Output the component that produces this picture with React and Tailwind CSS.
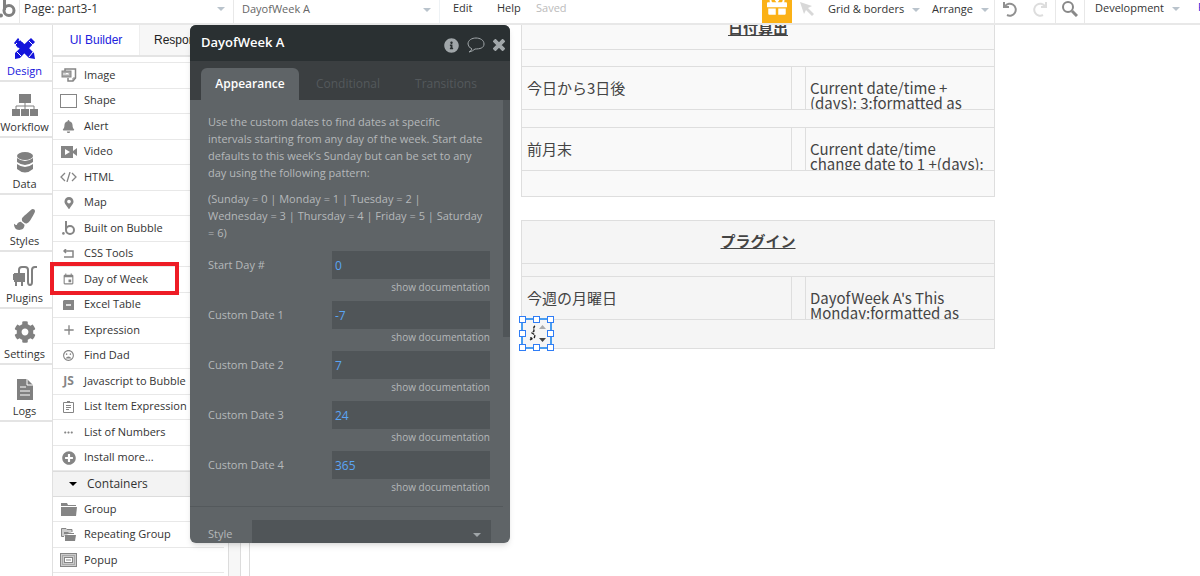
import React, { useState } from 'react'
import { FaPaintBrush, FaCog, FaBell, FaMapMarkerAlt, FaInfoCircle, FaPlusCircle, FaGift } from 'react-icons/fa'
import { MdEvent, MdMoodBad, MdMoreHoriz, MdAdd } from 'react-icons/md'

const DesignIcon = () => (
    <svg width="22" height="22" viewBox="0 0 22 22" fill="currentColor">
        <path d="M4 0 L9 5 L4 10 L0 5 Z M13 8 L20 15 L21 21 L15 20 L8 13 Z" />
        <path d="M17 0 L21 4 L6 20 L1 21 L1 15 Z" />
        <path d="M8 4 L14 9 L9 14 L4 9 Z" />
        <path d="M6 1 L5 3 M3 5 L1 7 M15 3 L19 7 M3 14 L7 18 M15 19 L19 14" stroke="#fff" strokeWidth="1" fill="none" />
    </svg>
)

const WorkflowIcon = () => (
    <svg width="26" height="22" viewBox="0 0 26 22" fill="currentColor">
        <path d="M7 0 H19 V9 H7 Z M0 15 H8 V22 H0 Z M9 15 H17 V22 H9 Z M18 15 H26 V22 H18 Z" />
        <path d="M13 9 V15 M4 15 V12 H22 V15" fill="none" stroke="currentColor" />
    </svg>
)

const DataIcon = () => (
    <svg width="18" height="21" viewBox="0 0 18 21" fill="currentColor">
        <ellipse cx="9" cy="4" rx="8" ry="4" />
        <path d="M1 6 Q9 12 17 6 V10 Q9 16 1 10 Z" />
        <path d="M1 12 Q9 18 17 12 V17 Q9 24 1 17 Z" />
    </svg>
)

const PluginIcon = () => (
    <svg width="24" height="21" viewBox="0 0 24 21" fill="none" stroke="currentColor" strokeWidth="2">
        <path d="M6 7 V4 Q6 1 9 1 H12 Q15 1 15 4 V16 Q15 19 17 19 Q19 19 19 16 V4 Q19 1 22 1 H24" />
        <path d="M1 7 H12 V16 H1 Z" fill="currentColor" stroke="none" />
        <path d="M3 16 V20 M9 16 V20 M0 8 V14" />
    </svg>
)

const LogsIcon = () => (
    <svg width="16" height="21" viewBox="0 0 16 21">
        <path d="M0 0 H10 L16 6 V21 H0 Z" fill="currentColor" />
        <path d="M10 0 V6 H16 M3 8 H9 M3 12 H13 M3 16 H13" fill="none" stroke="#fff" strokeWidth="1" />
    </svg>
)

const ImageIcon = () => (
    <svg width="16" height="14" viewBox="0 0 16 14" fill="none" stroke="currentColor">
        <path d="M4 3 V1 H14.5 V10 L12 13 H7 V10" strokeWidth="1.5" />
        <path d="M15 10 H12 V13" />
        <rect x="1" y="3" width="9" height="6" fill="#aaa" />
        <path d="M3 5 V7 M5 7 V5 L6 6 L7 5 V7" stroke="#fff" />
    </svg>
)

const ShapeIcon = () => (
    <svg width="17" height="14" viewBox="0 0 17 14" fill="none" stroke="currentColor">
        <rect x="0.5" y="0.5" width="16" height="13" />
    </svg>
)

const VideoIcon = () => (
    <svg width="16" height="12" viewBox="0 0 16 12" fill="currentColor">
        <rect width="12" height="12" />
        <path d="M12 5 L16 2 V10 L12 7 Z" />
        <path d="M4 3 L9 6 L4 9 Z" fill="#fff" />
    </svg>
)

const HtmlIcon = () => (
    <svg width="17" height="10" viewBox="0 0 17 10" fill="none" stroke="currentColor" strokeWidth="1.3">
        <path d="M5 1 L1 5 L5 9 M12 1 L16 5 L12 9 M10 0 L7 10" />
    </svg>
)

const BubbleIcon = () => (
    <svg width="14" height="14" viewBox="0 0 14 14" fill="none" stroke="currentColor" strokeWidth="2">
        <path d="M4 0 V9" />
        <circle cx="8" cy="9" r="4" />
        <circle cx="1.4" cy="12.4" r="1.3" fill="currentColor" stroke="none" />
    </svg>
)

const CssIcon = () => (
    <svg width="11" height="9" viewBox="0 0 11 9" fill="none" stroke="currentColor">
        <path d="M3 0 L1 2 L3 4 M1 2 H10 V8 H1" strokeWidth="1.5" />
    </svg>
)

const TableIcon = () => (
    <svg width="11" height="10" viewBox="0 0 11 10">
        <path d="M1 0 H11 V10 H0 V1 Z" fill="currentColor" />
        <path d="M3 5 H8" stroke="#fff" strokeWidth="1.5" />
    </svg>
)

const ListIcon = () => (
    <svg width="11" height="12" viewBox="0 0 11 12" fill="none" stroke="currentColor">
        <path d="M0.5 1.5 H10.5 V11.5 H0.5 Z M3 4.5 H8 M3 6.5 H8 M3 8.5 H6" />
        <path d="M4 1 H7" strokeWidth="2" />
    </svg>
)

const FolderIcon = () => (
    <svg width="16" height="13" viewBox="0 0 16 13" fill="currentColor">
        <path d="M0 0 H6 L7 2 H15 V3 H0 Z" />
        <path d="M0 4 H16 L15 13 H0 Z" />
    </svg>
)

const RepeatIcon = () => (
    <svg width="15" height="13" viewBox="0 0 15 13" fill="currentColor">
        <path d="M3 8.5 H0.5 V0.5 H5 L6 1.5 H11 V4" fill="#ccc" stroke="currentColor" />
        <path d="M3 4 H7 L8 5 H13 V6 H3 Z" />
        <path d="M4 7 H15 L14 13 H4 Z" />
    </svg>
)

const PopupIcon = () => (
    <svg width="17" height="14" viewBox="0 0 17 14" fill="none" stroke="currentColor">
        <rect x="0.5" y="0.5" width="16" height="13" fill="#ccc" />
        <rect x="2.5" y="2.5" width="12" height="9" strokeDasharray="1 1" />
        <rect x="4.5" y="4.5" width="8" height="5" fill="#fff" />
        <path d="M6 7 H11" />
    </svg>
)

const Caret = ({ className = 'text-[#b9c3cc]' }) => (
    <svg width="8" height="4" viewBox="0 0 8 4" className={`shrink-0 ${className}`}>
        <path d="M0 0 H8 L4 4 Z" fill="currentColor" />
    </svg>
)

const navItems = [
    { name: 'Design', icon: <DesignIcon />, active: true },
    { name: 'Workflow', icon: <WorkflowIcon /> },
    { name: 'Data', icon: <DataIcon /> },
    { name: 'Styles', icon: <FaPaintBrush size={21} /> },
    { name: 'Plugins', icon: <PluginIcon /> },
    { name: 'Settings', icon: <FaCog size={22} /> },
    { name: 'Logs', icon: <LogsIcon /> },
]

const elements = [
    { name: 'Image', icon: <ImageIcon /> },
    { name: 'Shape', icon: <ShapeIcon /> },
    { name: 'Alert', icon: <FaBell size={13} /> },
    { name: 'Video', icon: <VideoIcon /> },
    { name: 'HTML', icon: <HtmlIcon /> },
    { name: 'Map', icon: <FaMapMarkerAlt size={12} /> },
    { name: 'Built on Bubble', icon: <BubbleIcon /> },
    { name: 'CSS Tools', icon: <CssIcon /> },
    { name: 'Day of Week', icon: <MdEvent size={13} />, marked: true },
    { name: 'Excel Table', icon: <TableIcon /> },
    { name: 'Expression', icon: <MdAdd size={16} /> },
    { name: 'Find Dad', icon: <MdMoodBad size={13} /> },
    { name: 'Javascript to Bubble', icon: <b className="text-xs">JS</b> },
    { name: 'List Item Expression', icon: <ListIcon /> },
    { name: 'List of Numbers', icon: <MdMoreHoriz size={13} /> },
    { name: 'Install more...', icon: <FaPlusCircle size={14} /> },
]

const containers = [
    { name: 'Group', icon: <FolderIcon /> },
    { name: 'Repeating Group', icon: <RepeatIcon /> },
    { name: 'Popup', icon: <PopupIcon /> },
]

const initialFields = [
    { id: 'start', label: 'Start Day #', value: '0' },
    { id: 'date1', label: 'Custom Date 1', value: '-7' },
    { id: 'date2', label: 'Custom Date 2', value: '7' },
    { id: 'date3', label: 'Custom Date 3', value: '24' },
    { id: 'date4', label: 'Custom Date 4', value: '365' },
]

const TopBar = () => (
    <header className="flex h-[25px] shrink-0 items-stretch overflow-hidden border-b-2 border-[#e8e8e8] bg-white whitespace-nowrap text-[#333]">
        <div className="w-5 shrink-0 border-r border-[#e8e8e8] text-[#808080]">
            <svg width="16" height="18" viewBox="0 0 16 18" fill="none" stroke="currentColor" strokeWidth="3">
                <path d="M4.5 0 V10" />
                <circle cx="9" cy="10.5" r="5" />
                <circle cx="1" cy="15.5" r="2" fill="currentColor" stroke="none" />
            </svg>
        </div>
        <button className="flex w-[214px] shrink-0 items-center justify-between border-r border-[#e8e8e8] pr-2 pb-1.5 pl-1">
            Page: part3-1 <Caret />
        </button>
        <button className="flex w-[206px] shrink-0 items-center justify-between border-r border-[#eef2f5] pr-2 pb-1 pl-2 text-[11px] text-[#666]">
            DayofWeek A <Caret />
        </button>
        <nav className="flex items-center pb-1.5 pl-[13px] text-[11px]">
            <button className="w-11 text-left">Edit</button>
            <button className="w-[39px] text-left">Help</button>
            <span className="text-[#bbb]">Saved</span>
        </nav>
        <div className="ml-auto flex shrink-0 items-stretch text-[11px]">
            <button className="flex w-[30px] justify-center bg-[#fbb116] text-white" aria-label="Gift">
                <FaGift size={20} className="-mt-1" />
            </button>
            <button className="flex w-9 items-center pb-1.5 pl-2 text-[#d8d8d8]" aria-label="Pointer">
                <svg width="14" height="14" viewBox="0 0 14 14" fill="currentColor">
                    <path d="M0 0 L12 4 L8 6 L14 12 L12 14 L6 8 L4 12 Z" />
                </svg>
            </button>
            <button className="flex w-[104px] items-center gap-2 pb-1">Grid &amp; borders <Caret /></button>
            <button className="flex w-[63px] items-center gap-2 border-r border-[#e8e8e8] pb-1">Arrange <Caret /></button>
            <button className="flex w-[30px] items-center justify-center pb-1.5 text-[#909090]" aria-label="Undo">
                <svg width="16" height="16" viewBox="0 0 16 16" fill="none" stroke="currentColor" strokeWidth="2">
                    <path d="M2 1 V6 H7 M3 5 A6 6 0 1 1 5 14" />
                </svg>
            </button>
            <button className="flex w-[31px] items-center justify-center border-r border-[#e8e8e8] pb-1.5 text-[#ddd]" aria-label="Redo">
                <svg width="16" height="16" viewBox="0 0 16 16" fill="none" stroke="currentColor" strokeWidth="2">
                    <path d="M14 1 V6 H9 M13 5 A6 6 0 1 0 11 14" />
                </svg>
            </button>
            <button className="flex w-[29px] items-center justify-center border-r border-[#e8e8e8] pb-1.5 text-[#888]" aria-label="Search">
                <svg width="16" height="16" viewBox="0 0 16 16" fill="none" stroke="currentColor" strokeWidth="2">
                    <circle cx="6" cy="6" r="5" />
                    <path d="M10 10 L15 15" strokeWidth="3" />
                </svg>
            </button>
            <button className="flex w-[113px] items-center gap-2 pb-1.5 pl-2.5">Development <Caret /></button>
            <a href="#preview" className="w-0.5 overflow-hidden text-[#1d1dd8]">P</a>
        </div>
    </header>
)

const ElementRow = ({ item }) => (
    <li className="relative border-b border-[#e8e8e8]">
        <button className="flex h-full w-full items-center whitespace-nowrap text-[#333]">
            <span className="mr-[7px] ml-[7px] flex w-[17px] shrink-0 justify-center text-[#858585]">{item.icon}</span>
            {item.name}
        </button>
        {item.marked && (
            <span className="pointer-events-none absolute -top-[5px] -left-[3px] h-[33px] w-[129px] border-4 border-[#ee1c25]" />
        )}
    </li>
)

const Palette = () => (
    <aside className="flex w-[197px] shrink-0 border-r border-[#dcdcdc]">
        <div className="w-[175px] shrink-0 text-[11px]">
            <div className="flex h-8 border-b-2 border-[#e4e4e4] font-['Liberation_Sans',sans-serif] text-xs">
                <button className="w-[87px] border-r border-[#eee] text-[#2222dd]">UI Builder</button>
                <button className="flex-1 bg-[#f7f7f7] pl-3.5 text-left text-[#222]">Responsive</button>
            </div>
            <div className="h-1.5 border-b border-[#e8e8e8]" />
            <ul className="grid h-[408px] grid-rows-16 pr-1">
                {elements.map((item) => <ElementRow key={item.name} item={item} />)}
            </ul>
            <button className="flex h-[26px] w-full items-center gap-2.5 border-y border-[#dcdcdc] bg-[#f3f3f3] pl-4 text-xs text-[#333]">
                <Caret className="text-black" /> Containers
            </button>
            <ul className="grid h-[76px] grid-rows-3 pr-1">
                {containers.map((item) => <ElementRow key={item.name} item={item} />)}
            </ul>
        </div>
        <div className="w-[13px] border-x border-[#dcdcdc] bg-[#f7f7f7]" />
    </aside>
)

const PropertyEditor = () => {
    const [fields, setFields] = useState(initialFields)

    const handleChange = (id, value) => {
        setFields(fields.map((f) => (f.id === id ? { ...f, value } : f)))
    }

    return (
        <section className="absolute top-[25px] left-[190px] z-10 h-[518px] w-[320px] overflow-hidden rounded-md bg-[#5f6467] text-[#b5b8ba] shadow-md">
            <div className="flex h-9 items-center bg-[#2a3032] pr-[5px] pl-[11px]">
                <h2 className="flex-1 text-[13px] font-semibold text-white">DayofWeek A</h2>
                <div className="flex items-center gap-2 pt-1 text-[#a0a6a9]">
                    <button aria-label="Info"><FaInfoCircle size={15} /></button>
                    <button aria-label="Comment">
                        <svg width="18" height="16" viewBox="0 0 18 16" fill="none" stroke="currentColor">
                            <path d="M5 12 Q1 10 1 7 C1 3 5 1 9 1 S17 3 17 7 S13 12 8 12 Q6 14 2 15 Q4 14 5 12 Z" />
                        </svg>
                    </button>
                    <button aria-label="Close">
                        <svg width="12" height="12" viewBox="0 0 12 12" stroke="currentColor" strokeWidth="4">
                            <path d="M1 1 L11 11 M11 1 L1 11" />
                        </svg>
                    </button>
                </div>
            </div>
            <div className="flex h-[39px] items-end bg-[#3b3f41] pl-[11px] font-semibold text-[#54595c]">
                <button className="h-8 w-[98px] rounded-t-md bg-[#5f6467] text-white">Appearance</button>
                <button className="h-8 w-[98px] font-normal">Conditional</button>
                <button className="h-8 w-[98px] font-normal">Transitions</button>
            </div>
            <div className="relative pt-[13px] text-[11px]">
                <div className="absolute top-0 right-0 h-[237px] w-[7px] bg-[#505558]" />
                <div className="px-[18px] leading-[17px]">
                    <p className="mb-[9px]">
                        Use the custom dates to find dates at specific<br />
                        intervals starting from any day of the week. Start date<br />
                        defaults to this week’s Sunday but can be set to any<br />
                        day using the following pattern:
                    </p>
                    <p>
                        (Sunday = 0 | Monday = 1 | Tuesday = 2 |<br />
                        Wednesday = 3 | Thursday = 4 | Friday = 5 | Saturday<br />
                        = 6)
                    </p>
                </div>
                <div className="mr-5 ml-[18px] pt-2.5">
                    {fields.map((field) => (
                        <div key={field.id} className="h-[50px]">
                            <div className="flex h-7 items-center">
                                <label htmlFor={field.id} className="w-[124px]">{field.label}</label>
                                <input
                                    id={field.id}
                                    type="text"
                                    className="h-7 w-0 flex-1 bg-[#505558] px-[3px] text-xs text-[#5aa5f5] outline-none"
                                    value={field.value}
                                    onChange={(e) => handleChange(field.id, e.target.value)}
                                />
                            </div>
                            <a href="#docs" className="block text-right text-[10px] leading-[17px]">show documentation</a>
                        </div>
                    ))}
                </div>
                <div className="mt-[5px] mr-[7px] border-t border-[#54595c]" />
                <div className="relative mr-[19px] ml-[18px] flex items-center pt-[13px]">
                    <label htmlFor="style" className="w-11">Style</label>
                    <select id="style" className="h-7 w-0 flex-1 appearance-none bg-[#505558] px-2" />
                    <Caret className="pointer-events-none absolute right-2.5 bottom-[11px] text-[#a0a6a9]" />
                </div>
            </div>
        </section>
    )
}

const DataRow = ({ label, children }) => (
    <div className="flex h-11 border-y border-[#dedede]">
        <div className="w-[270px] shrink-0 border-r border-[#dedede] pt-[13px] pl-[5px]">{label}</div>
        <div className="w-[14px] shrink-0 border-r border-[#dedede]" />
        <div className="flex-1 overflow-hidden pt-[13px] pl-1">{children}</div>
    </div>
)

const handles = [
    '-top-1 -left-1', '-top-1 left-2.5', '-top-1 -right-1',
    'top-2.5 -left-1', 'top-2.5 -right-1',
    '-bottom-1 -left-1', '-bottom-1 left-2.5', '-right-1 -bottom-1',
]

const Canvas = () => (
    <main className="min-w-0 flex-1 overflow-hidden bg-white pl-[271px] font-['Noto_Sans_CJK_JP',sans-serif] text-[15px] leading-[15px] text-[#444]">
        <div className="w-[474px] border border-t-0 border-[#dedede] bg-[#f9f9f9]">
            <div className="flex h-[25px] items-start justify-center border-b border-[#dedede]">
                <h3 className="-mt-[5px] font-bold underline">日付算出</h3>
            </div>
            <div className="h-4" />
            <DataRow label="今日から3日後">Current date/time +<br />(days): 3:formatted as</DataRow>
            <div className="h-[17px]" />
            <DataRow label="前月末">Current date/time<br />change date to 1 +(days):</DataRow>
            <div className="h-[25px]" />
        </div>
        <div className="relative mt-[23px] w-[474px] border border-[#dedede] bg-[#f5f5f5]">
            <div className="flex h-[43px] items-center justify-center border-b border-[#dedede] pb-1">
                <h3 className="font-bold underline">プラグイン</h3>
            </div>
            <div className="h-3" />
            <DataRow label="今週の月曜日">DayofWeek A's This<br />Monday:formatted as</DataRow>
            <div className="h-7" />
            {/* selected plugin element */}
            <div className="absolute -bottom-px -left-px h-[31px] w-[31px] border-2 border-[#4a9df0]">
                <svg width="27" height="27" viewBox="0 0 27 27">
                    <path d="M12 6 Q10 7 11 11 L9 13 L12 15 L11 19 M7 20 L10 18 M8 17 V20" fill="none" stroke="#222" strokeWidth="1.4" strokeDasharray="3 1" />
                    <path d="M16 9 L19.5 5 L23 9 Z" fill="#aaa" />
                    <path d="M16 18 H23 L19.5 22 Z" fill="#444" />
                </svg>
                {handles.map((pos) => (
                    <span key={pos} className={`absolute size-[7px] border border-[#2f7df6] bg-white ${pos}`} />
                ))}
            </div>
        </div>
    </main>
)

export default function App() {
    return (
        <div className="relative flex h-screen flex-col overflow-hidden bg-white font-['Open_Sans',sans-serif] text-xs">
            <TopBar />
            <div className="flex min-h-0 flex-1">
                <nav className="w-[53px] shrink-0 border-r border-[#e0e0e0]">
                    <ul className="grid h-[397px] grid-rows-7">
                        {navItems.map((item) => (
                            <li key={item.name} className="border-b-2 border-[#e4e4e4] text-[11px]">
                                <button
                                    className={`flex h-full w-full flex-col items-center justify-end gap-0.5 pr-[3px] ${item.active ? 'text-[#1414dc]' : 'text-[#808080]'}`}
                                >
                                    {item.icon}
                                    <span className={`leading-[18px] ${item.active ? '' : 'text-[#333]'}`}>{item.name}</span>
                                </button>
                            </li>
                        ))}
                    </ul>
                </nav>
                <Palette />
                <Canvas />
            </div>
            <PropertyEditor />
        </div>
    )
}
